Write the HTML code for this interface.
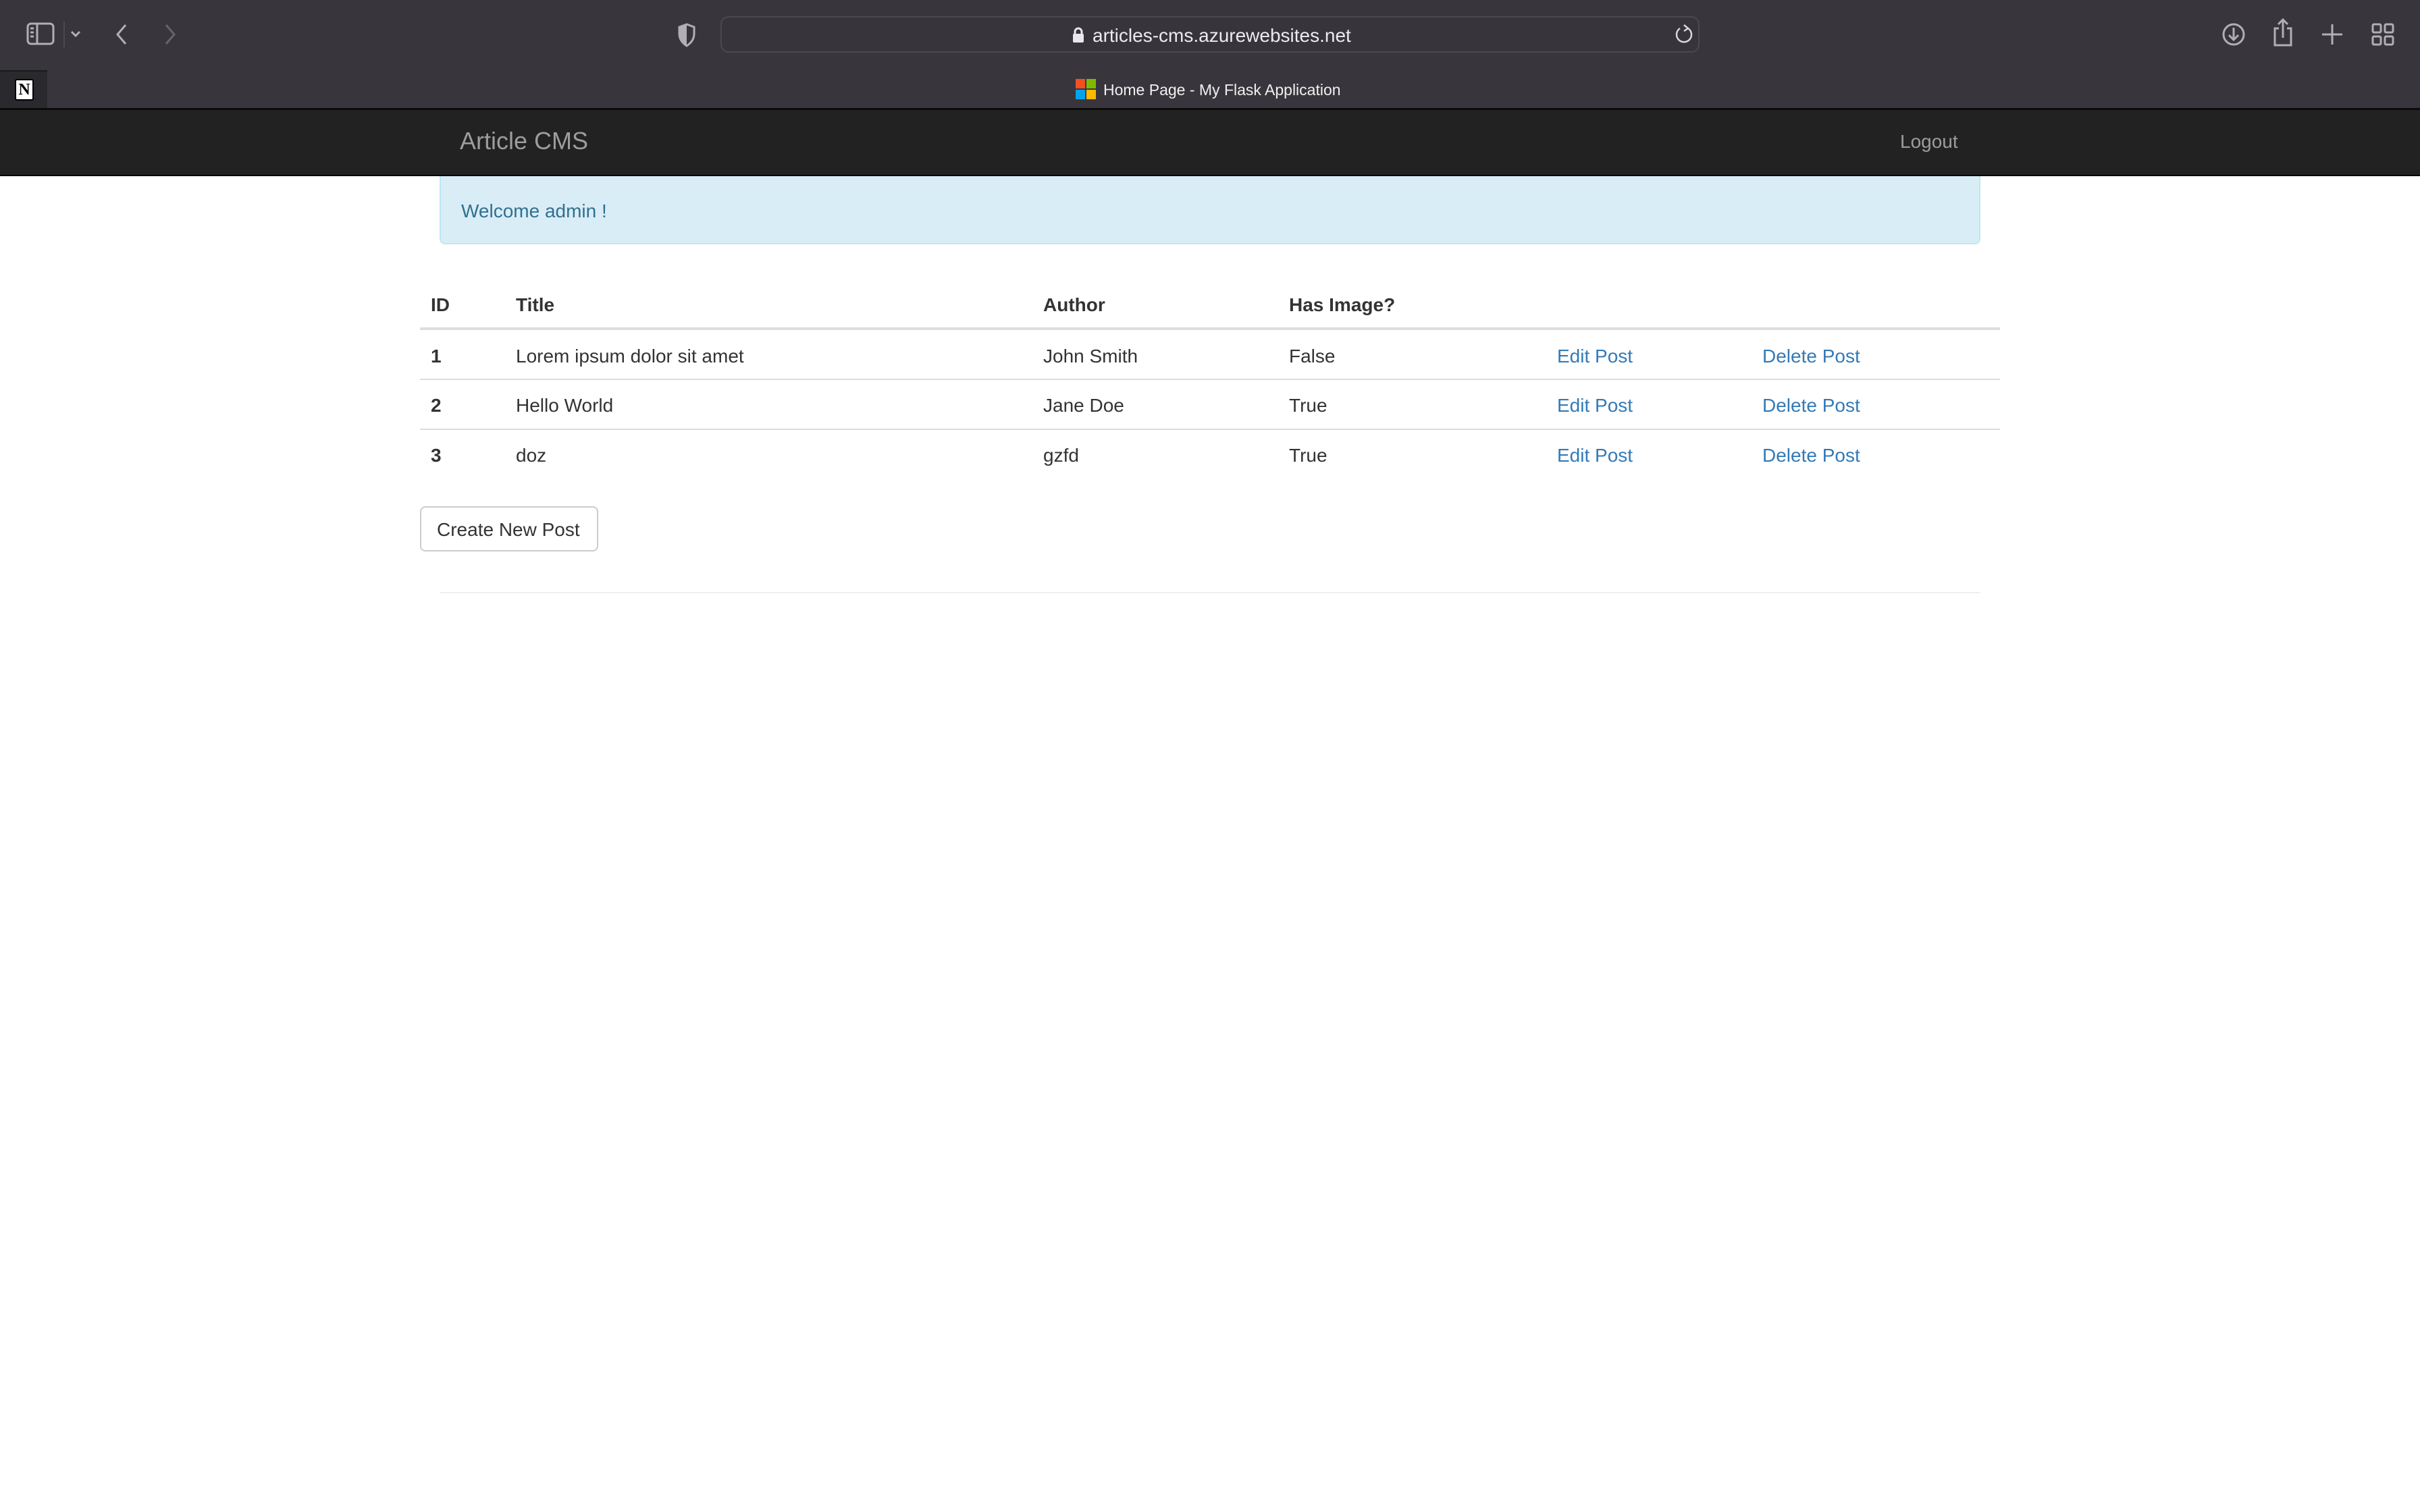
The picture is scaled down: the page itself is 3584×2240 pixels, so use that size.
<!DOCTYPE html>
<html><head><meta charset="utf-8"><style>
*{margin:0;padding:0;box-sizing:border-box}
body{width:3584px;height:2240px;background:#fff;font-family:"Liberation Sans",Arial,sans-serif;position:relative;overflow:hidden}
.a{position:absolute}
.tb{left:0;top:0;width:3584px;height:160px;background:#38363c}
.url{left:1067px;top:24px;width:1450px;height:54px;border:2px solid #4a4950;border-radius:12px;background:#37353b}
.nav{left:0;top:160px;width:3584px;height:101px;background:#222;border-top:3px solid #0a0a0a;border-bottom:2px solid #080808}
.t{font-size:28px;color:#333;line-height:28px}
.b{font-weight:bold}
.l{color:#337ab7}
.ln{left:622px;width:2340px;height:2px;background:#ddd}
svg{position:absolute}
</style></head><body>
<div class="a tb"></div>
<svg style="left:38px;top:32px" width="46" height="36" viewBox="0 0 46 36" fill="none" stroke="#b0afb4" stroke-width="3"><rect x="3" y="3" width="38" height="30" rx="5"/><line x1="17" y1="3" x2="17" y2="33"/><line x1="7" y1="10" x2="12" y2="10"/><line x1="7" y1="16" x2="12" y2="16"/><line x1="7" y1="22" x2="12" y2="22"/></svg>
<div class="a" style="left:94px;top:32px;width:2px;height:38px;background:#4a4950"></div>
<svg style="left:104px;top:44px" width="16" height="12" viewBox="0 0 16 12" fill="none" stroke="#b0afb4" stroke-width="3"><path d="M2 3l6 6 6-6"/></svg>
<svg style="left:168px;top:34px" width="24" height="34" viewBox="0 0 24 34" fill="none" stroke="#b0afb4" stroke-width="3"><path d="M18 3L6 17l12 14"/></svg>
<svg style="left:240px;top:34px" width="24" height="34" viewBox="0 0 24 34" fill="none" stroke="#66656a" stroke-width="3"><path d="M6 3l12 14L6 31"/></svg>
<svg style="left:1003px;top:34px" width="28" height="36" viewBox="0 0 28 36"><path d="M14 2L3 6v10c0 8 5 14 11 18 6-4 11-10 11-18V6z" fill="none" stroke="#b0afb4" stroke-width="3"/><path d="M3 6L14 2v32C8 30 3 24 3 16z" fill="#b0afb4"/></svg>
<div class="a url"></div>
<svg style="left:1587px;top:40px" width="20" height="24" viewBox="0 0 20 24"><path d="M5 11V7a5 5 0 0110 0v4" fill="none" stroke="#e8e8ea" stroke-width="3"/><rect x="2" y="10" width="16" height="13" rx="2" fill="#e8e8ea"/></svg>
<div class="a" style="left:1618px;top:37px;font-size:28px;color:#ebebed;line-height:32px">articles-cms.azurewebsites.net</div>
<svg style="left:2478px;top:34px" width="32" height="34" viewBox="0 0 32 34" fill="none" stroke="#d8d8da" stroke-width="2.5"><path d="M22 8a11 11 0 11-12 0"/><path d="M16 3l6 5-6 4"/></svg>
<svg style="left:3290px;top:32px" width="36" height="38" viewBox="0 0 36 38" fill="none" stroke="#b0afb4" stroke-width="3"><circle cx="18" cy="19" r="15"/><path d="M18 9v18M11 20l7 7 7-7"/></svg>
<svg style="left:3365px;top:26px" width="32" height="44" viewBox="0 0 32 44" fill="none" stroke="#b0afb4" stroke-width="3"><path d="M10 16H4v25h24V16h-6"/><path d="M16 30V3M9 10l7-7 7 7"/></svg>
<svg style="left:3437px;top:34px" width="34" height="34" viewBox="0 0 34 34" stroke="#b0afb4" stroke-width="3"><path d="M17 2v30M2 17h30"/></svg>
<svg style="left:3512px;top:34px" width="34" height="34" viewBox="0 0 34 34" fill="none" stroke="#b0afb4" stroke-width="3"><rect x="2" y="2" width="12" height="12" rx="2"/><rect x="20" y="2" width="12" height="12" rx="2"/><rect x="2" y="20" width="12" height="12" rx="2"/><rect x="20" y="20" width="12" height="12" rx="2"/></svg>
<div class="a" style="left:0;top:104px;width:70px;height:56px;background:#2a292d;border-top:2px solid #1a1a1a"></div>
<div class="a" style="left:22px;top:117px;width:28px;height:32px;background:#fff;border:2px solid #000;border-radius:3px;font-family:'Liberation Serif',serif;font-weight:bold;font-size:24px;line-height:28px;text-align:center;color:#000">N</div>
<svg style="left:1593px;top:117px" width="30" height="30" viewBox="0 0 30 30"><rect x="0" y="0" width="14" height="14" fill="#f25022"/><rect x="16" y="0" width="14" height="14" fill="#7fba00"/><rect x="0" y="16" width="14" height="14" fill="#00a4ef"/><rect x="16" y="16" width="14" height="14" fill="#ffb900"/></svg>
<div class="a" style="left:1634px;top:120px;font-size:23px;color:#f0f0f0;line-height:26px">Home Page - My Flask Application</div>
<div class="a nav"></div>
<div class="a" style="left:681px;top:189px;font-size:36px;color:#9d9d9d;line-height:40px">Article CMS</div>
<div class="a" style="left:2814px;top:195px;font-size:28px;color:#9d9d9d;line-height:30px">Logout</div>
<div class="a" style="left:651px;top:261px;width:2282px;height:101px;background:#d9edf7;border:2px solid #bce8f1;border-top:none;border-radius:0 0 8px 8px"></div>
<div class="a t" style="left:683px;top:299px;color:#31708f">Welcome admin !</div>
<div class="a t b" style="left:638px;top:438px">ID</div>
<div class="a t b" style="left:764px;top:438px">Title</div>
<div class="a t b" style="left:1545px;top:438px">Author</div>
<div class="a t b" style="left:1909px;top:438px">Has Image?</div>
<div class="a ln" style="top:485px;height:4px"></div>
<div class="a t b" style="left:638px;top:514px">1</div>
<div class="a t" style="left:764px;top:514px">Lorem ipsum dolor sit amet</div>
<div class="a t" style="left:1545px;top:514px">John Smith</div>
<div class="a t" style="left:1909px;top:514px">False</div>
<div class="a t l" style="left:2306px;top:514px">Edit Post</div>
<div class="a t l" style="left:2610px;top:514px">Delete Post</div>
<div class="a ln" style="top:561px"></div>
<div class="a t b" style="left:638px;top:587px">2</div>
<div class="a t" style="left:764px;top:587px">Hello World</div>
<div class="a t" style="left:1545px;top:587px">Jane Doe</div>
<div class="a t" style="left:1909px;top:587px">True</div>
<div class="a t l" style="left:2306px;top:587px">Edit Post</div>
<div class="a t l" style="left:2610px;top:587px">Delete Post</div>
<div class="a ln" style="top:635px"></div>
<div class="a t b" style="left:638px;top:661px">3</div>
<div class="a t" style="left:764px;top:661px">doz</div>
<div class="a t" style="left:1545px;top:661px">gzfd</div>
<div class="a t" style="left:1909px;top:661px">True</div>
<div class="a t l" style="left:2306px;top:661px">Edit Post</div>
<div class="a t l" style="left:2610px;top:661px">Delete Post</div>
<div class="a" style="left:622px;top:750px;width:264px;height:67px;border:2px solid #ccc;border-radius:8px;background:#fff"></div>
<div class="a t" style="left:647px;top:771px">Create New Post</div>
<div class="a" style="left:651px;top:877px;width:2282px;height:2px;background:#eee"></div>
</body></html>
